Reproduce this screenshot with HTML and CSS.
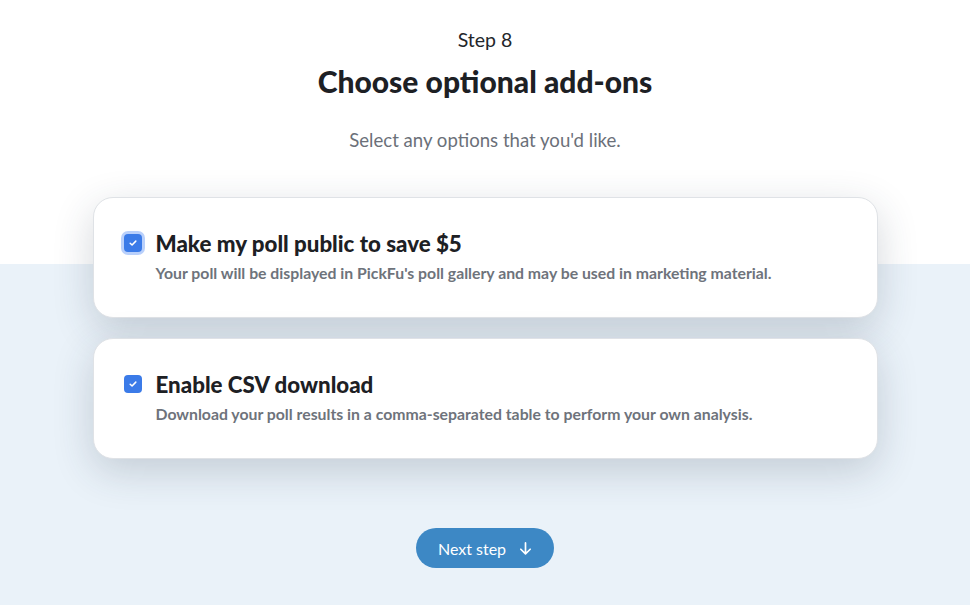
FILE: index.html
```html
<!DOCTYPE html>
<html>
<head>
<meta charset="utf-8">
<link rel="stylesheet" href="styles.css">
</head>
<body>
<main class="page">
  <header class="intro">
    <div class="step">Step 8</div>
    <h1 class="title">Choose optional add-ons</h1>
    <p class="subtitle">Select any options that you'd like.</p>
  </header>
  <section class="options">
    <label class="card">
      <span class="check focused">
        <svg viewBox="0 0 16 16" width="10" height="10"><path d="M3.5 8.5l3 2.8 6-6.3" fill="none" stroke="#fff" stroke-width="2.4" stroke-linecap="round" stroke-linejoin="round"/></svg>
      </span>
      <span class="card-text">
        <span class="card-title">Make my poll public to save $5</span>
        <span class="card-desc">Your poll will be displayed in PickFu's poll gallery and may be used in marketing material.</span>
      </span>
    </label>
    <label class="card">
      <span class="check">
        <svg viewBox="0 0 16 16" width="10" height="10"><path d="M3.5 8.5l3 2.8 6-6.3" fill="none" stroke="#fff" stroke-width="2.4" stroke-linecap="round" stroke-linejoin="round"/></svg>
      </span>
      <span class="card-text">
        <span class="card-title">Enable CSV download</span>
        <span class="card-desc">Download your poll results in a comma-separated table to perform your own analysis.</span>
      </span>
    </label>
  </section>
  <div class="actions">
    <button class="next">Next step
      <svg viewBox="0 0 16 16" width="15" height="15"><path d="M8 2v11.5M3 8.8l5 4.9 5-4.9" fill="none" stroke="#fff" stroke-width="1.8" stroke-linecap="round" stroke-linejoin="round"/></svg>
    </button>
  </div>
</main>
</body>
</html>
```
FILE: styles.css
```css
* { box-sizing: border-box; }
html, body { margin: 0; padding: 0; }
body {
  width: 970px;
  height: 605px;
  overflow: hidden;
  font-family: Lato, "Liberation Sans", sans-serif;
  background: linear-gradient(#ffffff 0, #ffffff 264px, #eaf2f9 264px);
}
.page {
  display: flex;
  flex-direction: column;
  align-items: center;
}
.intro {
  display: flex;
  flex-direction: column;
  align-items: center;
  padding-top: 27px;
}
.step {
  font-size: 19.5px;
  line-height: 26px;
  color: #23262a;
}
.title {
  margin: 10px 0 0;
  font-size: 30px;
  line-height: 36px;
  font-weight: 900;
  color: #1d2024;
}
.subtitle {
  margin: 29px 0 0;
  font-size: 18.6px;
  line-height: 24px;
  color: #6b7079;
}
.options {
  margin-top: 45px;
  display: flex;
  flex-direction: column;
  gap: 20px;
}
.card {
  width: 785px;
  height: 121px;
  background: #fff;
  border: 1px solid #dfe2e6;
  border-radius: 20px;
  box-shadow: 0 12px 40px rgba(40, 55, 75, 0.20);
  display: flex;
  align-items: flex-start;
  padding: 34px 30px 0 30px;
  gap: 14px;
}
.check {
  flex: none;
  width: 18px;
  height: 18px;
  margin-top: 2px;
  border-radius: 4px;
  background: #3b7be8;
  display: flex;
  align-items: center;
  justify-content: center;
}
.check.focused {
  box-shadow: 0 0 0 3px #b9d0fb;
}
.card-text {
  display: flex;
  flex-direction: column;
}
.card-title {
  font-size: 22.3px;
  line-height: 24px;
  font-weight: 900;
  color: #1d2024;
}
.card-desc {
  margin-top: 7px;
  font-size: 15.8px;
  line-height: 20px;
  font-weight: 700;
  color: #6e737b;
}
.actions {
  margin-top: 69px;
}
.next {
  height: 40px;
  padding: 0 21px 0 22px;
  border: none;
  border-radius: 20px;
  background: #3d88c5;
  color: #fff;
  font-family: Lato, "Liberation Sans", sans-serif;
  font-size: 16px;
  display: flex;
  align-items: center;
  gap: 12px;
}
```
